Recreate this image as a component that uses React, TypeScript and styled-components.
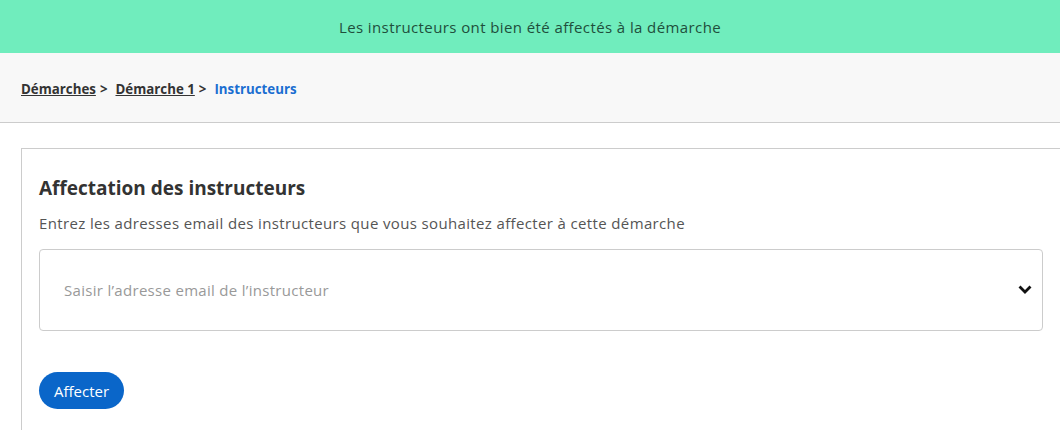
import React from "react";
import styled, { createGlobalStyle } from "styled-components";

const GlobalStyle = createGlobalStyle`
  body {
    margin: 0;
    font-family: "Open Sans", Lato, sans-serif;
    background: #ffffff;
    color: #333333;
    overflow: hidden;
  }
`;

const Banner = styled.div`
  height: 53px;
  background: #70edbd;
  display: flex;
  align-items: center;
  justify-content: center;
  color: #1f4f3c;
  font-size: 15px;
  letter-spacing: 0.4px;
`;

const BreadcrumbBar = styled.nav`
  height: 70px;
  background: #f8f8f8;
  border-bottom: 1px solid #cccccc;
  display: flex;
  align-items: center;
  padding: 3px 0 0 21px;
  box-sizing: border-box;
  font-size: 13.3px;
  font-weight: 700;
`;

const Crumb = styled.a<{ $active?: boolean }>`
  color: ${(p) => (p.$active ? "#1a6ed1" : "#333333")};
  text-decoration: ${(p) => (p.$active ? "none" : "underline")};
  cursor: pointer;
`;

const Separator = styled.span`
  margin: 0 8px 0 4px;
  color: #333333;
`;

const Card = styled.section`
  margin: 25px 0 0 21px;
  width: 1040px;
  border: 1px solid #cccccc;
  padding: 26px 17px 40px;
  box-sizing: border-box;
`;

const Title = styled.h2`
  margin: 0;
  font-size: 19px;
  font-weight: 700;
  color: #333333;
  line-height: 26px;
`;

const Subtitle = styled.p`
  margin: 12px 0 16px;
  font-size: 15px;
  letter-spacing: 0.36px;
  color: #555555;
  line-height: 20px;
`;

const SelectBox = styled.div`
  height: 82px;
  border: 1px solid #cccccc;
  border-radius: 4px;
  display: flex;
  align-items: center;
  justify-content: space-between;
  padding: 0 10px 0 24px;
  box-sizing: border-box;
`;

const Placeholder = styled.span`
  font-size: 15px;
  letter-spacing: 0.3px;
  color: #999999;
`;

const Chevron = styled.svg`
  width: 14px;
  height: 14px;
`;

const Button = styled.button`
  margin-top: 41px;
  height: 37px;
  padding: 0 15px;
  border: none;
  border-radius: 19px;
  background: #0a66c9;
  color: #ffffff;
  font-family: inherit;
  font-size: 15px;
  cursor: pointer;
`;

const App: React.FC = () => {
  return (
    <>
      <GlobalStyle />
      <Banner>Les instructeurs ont bien été affectés à la démarche</Banner>
      <BreadcrumbBar>
        <Crumb>Démarches</Crumb>
        <Separator>&gt;</Separator>
        <Crumb>Démarche 1</Crumb>
        <Separator>&gt;</Separator>
        <Crumb $active>Instructeurs</Crumb>
      </BreadcrumbBar>
      <Card>
        <Title>Affectation des instructeurs</Title>
        <Subtitle>
          Entrez les adresses email des instructeurs que vous souhaitez affecter à cette démarche
        </Subtitle>
        <SelectBox>
          <Placeholder>Saisir l’adresse email de l’instructeur</Placeholder>
          <Chevron viewBox="0 0 14 14">
            <path d="M2.5 4.5 L7 9 L11.5 4.5" fill="none" stroke="#111" strokeWidth="2.8" strokeLinecap="square" />
          </Chevron>
        </SelectBox>
        <Button>Affecter</Button>
      </Card>
    </>
  );
};

export default App;
